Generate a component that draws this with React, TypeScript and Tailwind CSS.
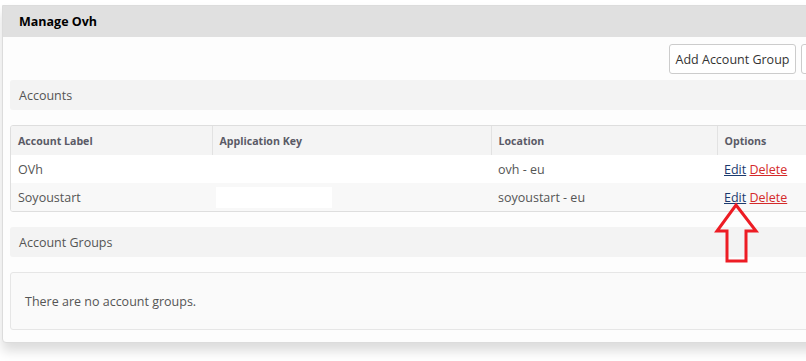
import React from 'react';

const rows = [
  { label: 'OVh', key: '', location: 'ovh - eu' },
  { label: 'Soyoustart', key: 'hidden', location: 'soyoustart - eu' },
];

const SectionBar = ({ title }: { title: string }) => (
  <div className="h-[30px] bg-[#f3f3f3] rounded-[3px] flex items-center px-[9px] pt-[2px] text-[12.5px] text-[#555]">
    {title}
  </div>
);

const App = () => {
  return (
    <div className="relative w-[806px] h-[361px] overflow-hidden bg-white font-['Open_Sans',sans-serif]">
      <div className="ml-[2px] mt-[5px] w-[840px] border border-[#dcdcdc] rounded-b-[4px] bg-[#fdfdfd] shadow-[0_8px_12px_rgba(0,0,0,0.14)]">
        <div className="h-[31px] bg-[#e0e0e0] flex items-center px-[16px] pt-[2px] text-[12.5px] font-bold text-black">
          Manage Ovh
        </div>

        <div className="px-[7px] pb-[12px]">
          <div className="mt-[7px] ml-[659px] flex gap-[5px]">
            <button className="shrink-0 whitespace-nowrap h-[30px] w-[127px] pt-[2px] bg-white border border-[#ccc] rounded-[3px] text-[12.5px] text-[#333]">
              Add Account Group
            </button>
            <button className="shrink-0 whitespace-nowrap h-[30px] pl-[12px] pr-[10px] pt-[2px] bg-white border border-[#ccc] rounded-[3px] text-[12.5px] text-[#333]">
              Add Account
            </button>
          </div>

          <div className="mt-[6px]">
            <SectionBar title="Accounts" />
          </div>

          <div className="mt-[15px] border border-[#dedede] rounded-[3px] overflow-hidden">
            <table className="w-full border-collapse text-[12.5px] text-[#555]">
              <thead>
                <tr className="h-[29px] bg-[#f4f4f4] text-[10.6px] font-bold text-[#5a5a66] text-left">
                  <th className="w-[201px] px-[7px] pt-[3px] border-r border-[#e2e2e2]">Account Label</th>
                  <th className="w-[279px] px-[7px] pt-[3px] border-r border-[#e2e2e2]">Application Key</th>
                  <th className="w-[226px] px-[7px] pt-[3px] border-r border-[#e2e2e2]">Location</th>
                  <th className="px-[7px] pt-[3px]">Options</th>
                </tr>
              </thead>
              <tbody>
                {rows.map((r, i) => (
                  <tr key={r.label} className={i % 2 === 0 ? 'h-[28px] bg-white' : 'h-[28px] bg-[#f8f8f8]'}>
                    <td className="px-[7px] pt-[2px]">{r.label}</td>
                    <td className="px-[4px]">
                      {r.key && <div className="w-[116px] h-[21px] bg-white" />}
                    </td>
                    <td className="px-[7px] pt-[2px]">{r.location}</td>
                    <td className="px-[7px] pt-[2px]">
                      <a className="underline text-[#1b3a6e]">Edit</a>{' '}
                      <a className="underline text-[#d42a2a]">Delete</a>
                    </td>
                  </tr>
                ))}
              </tbody>
            </table>
          </div>

          <div className="mt-[15px]">
            <SectionBar title="Account Groups" />
          </div>

          <div className="mt-[15px] h-[58px] border border-[#e6e6e6] rounded-[3px] bg-[#fafafa] flex items-center px-[14px] pt-[2px] text-[12.5px] text-[#555]">
            There are no account groups.
          </div>
        </div>
      </div>

      <svg
        className="absolute left-[712px] top-[200px] w-[50px] h-[66px]"
        viewBox="712 200 50 66"
        fill="none"
      >
        <polygon
          points="736,205 756,231 746,231 746,261 727,261 727,231 717,231"
          stroke="#ed1c24"
          strokeWidth="3"
          strokeLinejoin="miter"
        />
      </svg>
    </div>
  );
};

export default App;
